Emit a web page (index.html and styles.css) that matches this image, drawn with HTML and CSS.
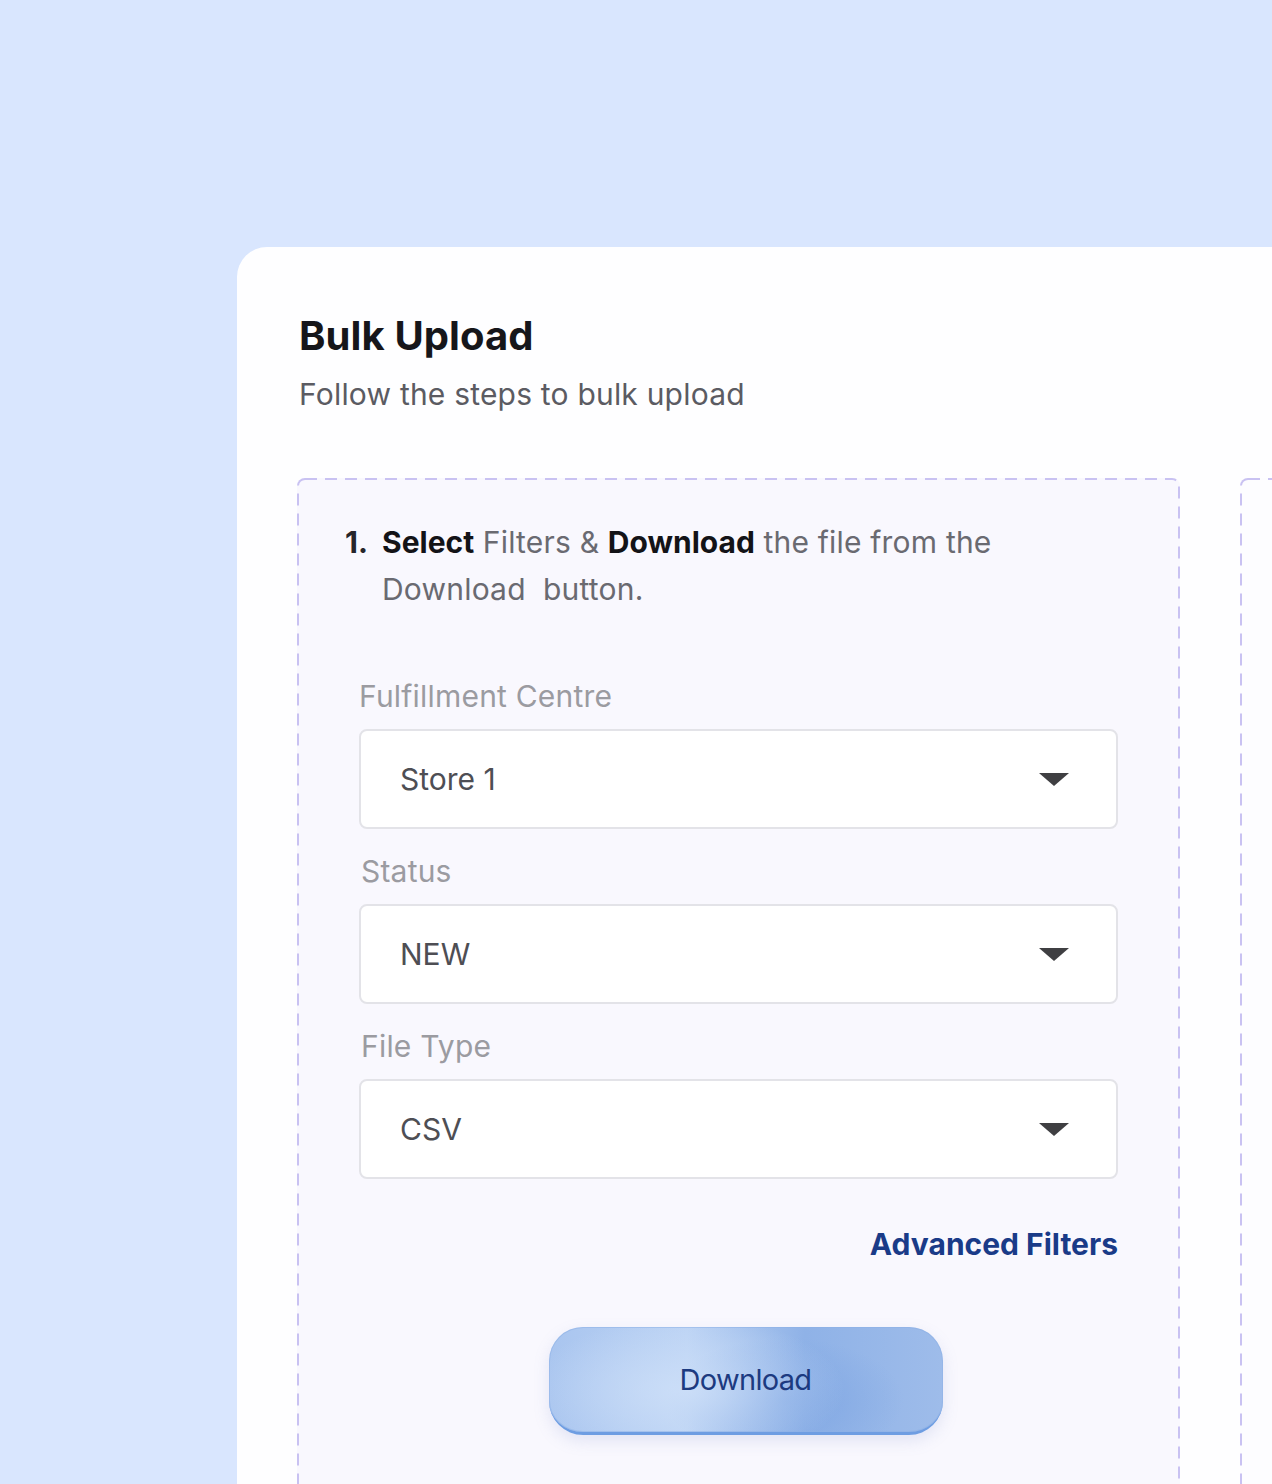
FILE: index.html
```html
<!DOCTYPE html>
<html lang="en">
<head>
<meta charset="utf-8">
<title>Bulk Upload</title>
<link rel="stylesheet" href="styles.css">
</head>
<body>
<div class="page">
  <section class="card">
    <h1 class="title">Bulk Upload</h1>
    <p class="subtitle">Follow the steps to bulk upload</p>
    <div class="steps">
      <div class="step">
        <div class="step-text">
          <span class="num">1.</span>
          <p class="desc"><b>Select</b> Filters &amp; <b>Download</b> the file from the Download&nbsp; button.</p>
        </div>
        <div class="field">
          <label class="label">Fulfillment Centre</label>
          <div class="select"><span>Store 1</span><span class="caret"></span></div>
        </div>
        <div class="field">
          <label class="label l2">Status</label>
          <div class="select"><span>NEW</span><span class="caret"></span></div>
        </div>
        <div class="field">
          <label class="label l2">File Type</label>
          <div class="select"><span>CSV</span><span class="caret"></span></div>
        </div>
        <div class="adv-row"><a class="adv">Advanced Filters</a></div>
        <div class="btn-row"><button class="dl-btn">Download</button></div>
      </div>
      <div class="step step-next"></div>
    </div>
  </section>
</div>
</body>
</html>
```
FILE: styles.css
```css
* { box-sizing: border-box; }
html, body {
  margin: 0;
  padding: 0;
  background: #d9e6fe;
  overflow: hidden;
  height: 1484px;
}
body {
  font-family: Inter, "Noto Sans", "Liberation Sans", sans-serif;
}
.page {
  padding: 247px 0 0 237px;
}
.card {
  width: 1200px;
  height: 1400px;
  background: #fefeff;
  border-radius: 30px 0 0 0;
  padding: 65px 0 0 60px;
}
.title {
  margin: 0 0 0 2px;
  font-size: 40px;
  font-weight: 700;
  color: #16161a;
  line-height: 48px;
  letter-spacing: 0.1px;
}
.subtitle {
  margin: 16px 0 0 2px;
  font-size: 30px;
  line-height: 36px;
  color: #5b5b62;
  letter-spacing: 0.2px;
}
.steps {
  display: flex;
  gap: 60px;
  margin-top: 66px;
}
.step {
  flex: 0 0 883px;
  height: 1100px;
  background-color: #f9f8fe;
  background-image: url("data:image/svg+xml,%3Csvg xmlns='http://www.w3.org/2000/svg' width='100%25' height='100%25'%3E%3Crect width='100%25' height='100%25' rx='8' ry='8' fill='none' stroke='%23c9c2f2' stroke-width='4' stroke-dasharray='12 8'/%3E%3C/svg%3E");
  border-radius: 8px;
  padding: 41px 62px 0 62px;
}
.step-next {
  background-color: #fdfdff;
}
.step-text {
  display: flex;
  margin-left: -14px;
  font-size: 30px;
  line-height: 47px;
  color: #6a6a71;
}
.num {
  width: 37px;
  flex: none;
  font-weight: 700;
  color: #26262b;
}
.desc {
  margin: 0;
  max-width: 640px;
  letter-spacing: 0.2px;
}
.desc b {
  color: #131317;
  font-weight: 700;
  letter-spacing: 0;
}
.field {
  display: flex;
  flex-direction: column;
}
.label {
  font-size: 30px;
  line-height: 34px;
  color: #9b9ba1;
  margin: 66px 0 16px 0;
  letter-spacing: 0.2px;
}
.label.l2 {
  margin: 25px 0 16px 2px;
}
.select {
  height: 100px;
  background: #ffffff;
  border: 2px solid #e3e3e8;
  border-radius: 8px;
  display: flex;
  align-items: center;
  justify-content: space-between;
  padding: 0 47px 0 39px;
  font-size: 30px;
  color: #4e4e54;
}
.caret {
  width: 0;
  height: 0;
  border-left: 15px solid transparent;
  border-right: 15px solid transparent;
  border-top: 13px solid #3f3f42;
}
.adv-row {
  display: flex;
  justify-content: flex-end;
  margin-top: 48px;
}
.adv {
  font-size: 30px;
  line-height: 34px;
  font-weight: 700;
  color: #1a3b88;
  letter-spacing: 0;
}
.btn-row {
  display: flex;
  justify-content: center;
  margin-top: 66px;
  padding-left: 14px;
}
.dl-btn {
  width: 394px;
  height: 108px;
  border-radius: 34px;
  border: none;
  border-bottom: 3px solid #6e9de2;
  background:
    radial-gradient(ellipse 40% 70% at 35% 60%, rgba(205,223,248,0.9) 0%, rgba(205,223,248,0) 100%),
    radial-gradient(ellipse 30% 60% at 60% 70%, rgba(124,164,226,0.8) 0%, rgba(124,164,226,0) 100%),
    linear-gradient(90deg, #a9c5ef 0%, #bcd3f4 35%, #8fb2e7 65%, #9ebcea 100%);
  box-shadow: 0 6px 16px rgba(120,140,200,0.18), inset 0 0 0 1px rgba(140,175,230,0.5);
  font-family: Inter, "Noto Sans", "Liberation Sans", sans-serif;
  font-size: 29px;
  color: #1c3a80;
  letter-spacing: -0.7px;
  padding: 0;
}
```
